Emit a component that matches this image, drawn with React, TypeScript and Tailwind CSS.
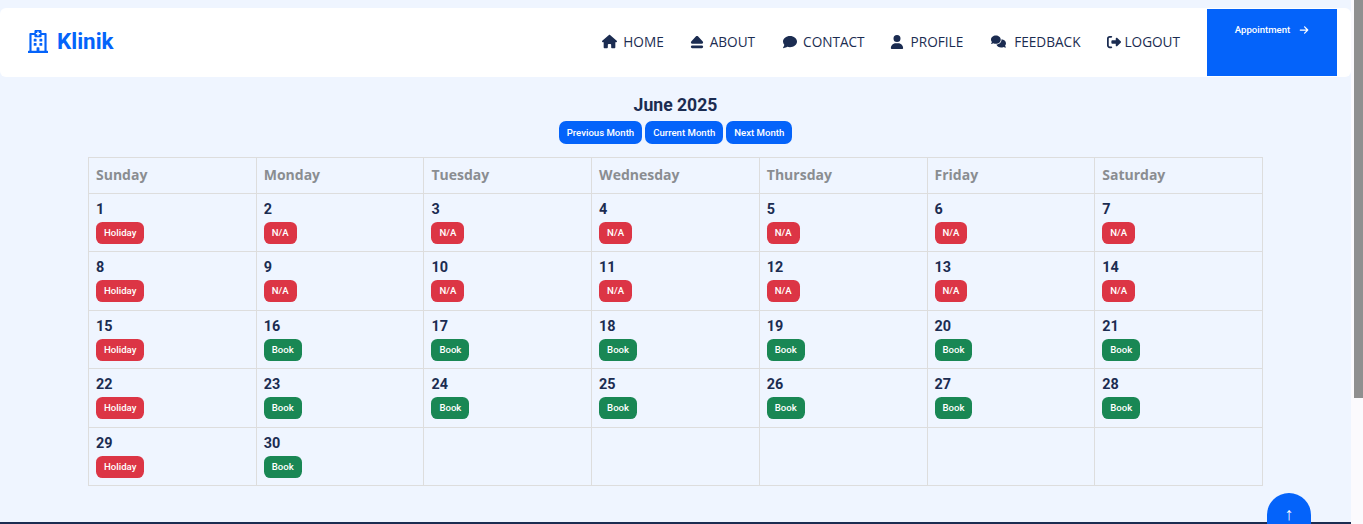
import React from "react";
import { FaHouse, FaEject, FaComment, FaUser, FaComments, FaRightFromBracket, FaArrowRight } from "react-icons/fa6";
import { FaRegHospital } from "react-icons/fa";

const nav: [React.ComponentType<{ className?: string }>, string, string, string, string][] = [
  [FaHouse, "HOME", "gap-[6px]", "", "h-[15px]"],
  [FaEject, "ABOUT", "gap-[6px]", "ml-[26px]", "h-[14px]"],
  [FaComment, "CONTACT", "gap-[6px]", "ml-[28px]", "h-[14px]"],
  [FaUser, "PROFILE", "gap-[7px]", "ml-[25px]", "h-[14px]"],
  [FaComments, "FEEDBACK", "gap-[8px]", "ml-[28px]", "h-[15px]"],
  [FaRightFromBracket, "LOGOUT", "gap-[3px]", "ml-[27px]", "h-[14px]"],
];

const days = ["Sunday", "Monday", "Tuesday", "Wednesday", "Thursday", "Friday", "Saturday"];

function Badge({ day }: { day: number }) {
  const holiday = day % 7 === 1;
  const book = !holiday && day >= 16;
  const label = holiday ? "Holiday" : book ? "Book" : "N/A";
  const color = holiday || !book ? "bg-[#dc3545]" : "bg-[#198754]";
  return (
    <span className={`inline-block rounded-[6.4px] px-2 py-[4px] text-[9.6px] leading-[14px] font-medium text-white [font-family:Roboto,sans-serif] ${color}`}>
      {label}
    </span>
  );
}

function Cell({ day }: { day?: number }) {
  return (
    <td className="h-[58.4px] border border-[#dddddd] py-[7px] pr-2 pl-[7px] align-top">
      {day && (
        <>
          <div className="text-[14.4px] leading-[17px] font-bold text-[#1b2c51] [font-family:Roboto,sans-serif]">{day}</div>
          <div className="mt-[4px] flex">
            <Badge day={day} />
          </div>
        </>
      )}
    </td>
  );
}

export default function App() {
  const rows: (number | undefined)[][] = [];
  for (let i = 0; i < 5; i++) {
    const r: (number | undefined)[] = [];
    for (let j = 1; j <= 7; j++) {
      const d = i * 7 + j;
      r.push(d <= 30 ? d : undefined);
    }
    rows.push(r);
  }
  return (
    <div className="flex h-[524px] w-full overflow-hidden bg-[#fbfafd] [font-family:'Open_Sans',sans-serif]">
      <div className="relative flex h-full w-[1351px] shrink-0 flex-col bg-[#eff5ff]">
        <header className="mt-2 flex h-[69px] items-center justify-end rounded-[6px] bg-white pr-[14px] pl-[28px]">
          <div className="mr-auto mb-[2px] flex items-center gap-[9px] text-[#0463fa]">
            <FaRegHospital className="h-[23px] w-[20px]" />
            <span className="text-[22.4px] leading-none font-bold [font-family:Roboto,sans-serif]">Klinik</span>
          </div>
          <nav className="mb-[1px] flex items-center text-[13.6px] text-[#1b2c51]">
            {nav.map(([Icon, label, gap, ml, h]) => (
              <span key={label} className={`flex items-center ${gap} ${ml}`}>
                <Icon className={`${h} w-auto`} />
                {label}
              </span>
            ))}
          </nav>
          <div className="ml-[27px] flex h-[67px] w-[130px] items-start justify-center gap-[9px] bg-[#0463fa] pt-[14px] text-[9.6px] leading-[14px] font-medium text-white [font-family:Roboto,sans-serif]">
            Appointment
            <FaArrowRight className="mt-[2px] h-[10px] w-[10px]" />
          </div>
        </header>
        <main className="flex flex-col items-center">
          <h1 className="mt-[17px] text-[17.6px] leading-[22px] font-bold text-[#1b2c51] [font-family:Roboto,sans-serif]">June 2025</h1>
          <div className="mt-[5px] flex gap-[3px]">
            {["Previous Month", "Current Month", "Next Month"].map((t) => (
              <span key={t} className="rounded-[7px] bg-[#0463fa] px-2 py-[4px] text-[9.6px] leading-[15px] font-medium text-white [font-family:Roboto,sans-serif]">
                {t}
              </span>
            ))}
          </div>
          <table className="mt-[13px] w-[1175px] table-fixed border-collapse">
            <thead>
              <tr>
                {days.map((d) => (
                  <th key={d} className="h-[36px] border border-[#dddddd] pr-2 pb-[2px] pl-[7px] text-left text-[14px] font-bold text-[#8a8d91]">
                    {d}
                  </th>
                ))}
              </tr>
            </thead>
            <tbody>
              {rows.map((r, i) => (
                <tr key={i}>
                  {r.map((d, j) => (
                    <Cell key={j} day={d} />
                  ))}
                </tr>
              ))}
            </tbody>
          </table>
        </main>
        <div className="absolute bottom-0 left-0 h-[2px] w-full bg-[#1b2c51]" />
        <div className="absolute top-[493px] left-[1267px] flex h-[31px] w-[44px] items-start justify-center rounded-t-full bg-[#0463fa] pt-[11px] text-[18px] leading-[18px] text-white">
          ↑
        </div>
      </div>
      <div className="flex-1 pl-[3px]">
        <div className="h-[398px] w-full bg-[#8f8f8f]" />
      </div>
    </div>
  );
}
